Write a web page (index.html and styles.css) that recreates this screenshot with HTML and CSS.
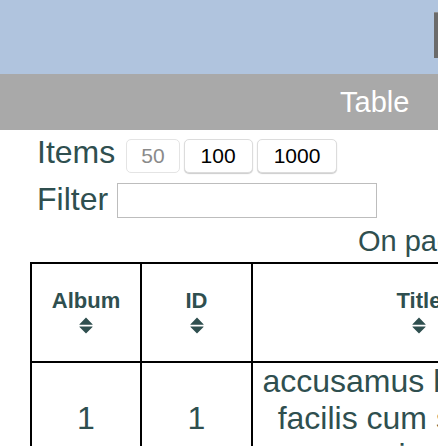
FILE: index.html
```html
<!DOCTYPE html>
<html lang="en">
<head>
<meta charset="utf-8">
<title>Table</title>
<link rel="stylesheet" href="styles.css">
</head>
<body>
<div class="page">
  <header class="topbar">
    <div class="search-box"></div>
  </header>
  <nav class="navbar">
    <span class="nav-title">Table</span>
  </nav>
  <main class="content">
    <div class="items-row">
      <span class="row-label">Items</span>
      <div class="size-group">
        <button class="size-btn is-current" disabled>50</button>
        <button class="size-btn">100</button>
        <button class="size-btn">1000</button>
      </div>
    </div>
    <div class="filter-row">
      <label class="row-label" for="filter">Filter</label>
      <input class="filter-input" id="filter" type="text">
    </div>
    <div class="pager">On page 1 of 100</div>
    <table class="data-table">
      <colgroup>
        <col class="col-album">
        <col class="col-id">
        <col class="col-title">
      </colgroup>
      <thead>
        <tr>
          <th><span class="th-label">Album</span><svg class="sort-icon" viewBox="0 0 14 17" aria-hidden="true"><path d="M7 0.5 L13.5 7.2 Q14 7.8 13.2 7.8 H0.8 Q0 7.8 0.5 7.2 Z M0.8 9.4 H13.2 Q14 9.4 13.5 10 L7 16.6 L0.5 10 Q0 9.4 0.8 9.4 Z"/></svg></th>
          <th><span class="th-label">ID</span><svg class="sort-icon" viewBox="0 0 14 17" aria-hidden="true"><path d="M7 0.5 L13.5 7.2 Q14 7.8 13.2 7.8 H0.8 Q0 7.8 0.5 7.2 Z M0.8 9.4 H13.2 Q14 9.4 13.5 10 L7 16.6 L0.5 10 Q0 9.4 0.8 9.4 Z"/></svg></th>
          <th><span class="th-label">Title</span><svg class="sort-icon" viewBox="0 0 14 17" aria-hidden="true"><path d="M7 0.5 L13.5 7.2 Q14 7.8 13.2 7.8 H0.8 Q0 7.8 0.5 7.2 Z M0.8 9.4 H13.2 Q14 9.4 13.5 10 L7 16.6 L0.5 10 Q0 9.4 0.8 9.4 Z"/></svg></th>
        </tr>
      </thead>
      <tbody>
        <tr>
          <td>1</td>
          <td>1</td>
          <td>accusamus beatae ad facilis cum similique qui sunt</td>
        </tr>
        <tr>
          <td>1</td>
          <td>2</td>
          <td>reprehenderit est deserunt velit ipsam</td>
        </tr>
      </tbody>
    </table>
  </main>
</div>
</body>
</html>
```
FILE: styles.css
```css
html, body {
  margin: 0;
  padding: 0;
  overflow: hidden;
}

body {
  font-family: "Liberation Sans", Arial, sans-serif;
  color: #2f4f4f;
}

.page {
  width: 1000px;
}

.topbar {
  height: 74px;
  background: #b0c4de;
  box-sizing: border-box;
  padding: 12px 0 0 434px;
}

.search-box {
  width: 220px;
  height: 46px;
  box-sizing: border-box;
  background: #6b6b6b;
  border-top: 1px solid #8e8e8e;
}

.navbar {
  height: 56px;
  background: #a9a9a9;
  display: flex;
  align-items: center;
  padding-left: 340px;
}

.nav-title {
  color: #ffffff;
  font-size: 29px;
}

.content {
  padding-top: 4px;
}

.row-label {
  font-size: 32px;
}

.items-row {
  display: flex;
  align-items: baseline;
  padding-left: 37px;
}

.size-group {
  display: flex;
  gap: 4px;
  margin-left: 11px;
}

.size-btn {
  font-family: "Liberation Sans", Arial, sans-serif;
  font-size: 21px;
  line-height: 24px;
  padding: 4px 16px;
  border: 1px solid #dcdcdc;
  border-radius: 5px;
  background: #ffffff;
  color: #000000;
  box-shadow: 0 1px 1px rgba(0, 0, 0, 0.2);
}

.size-btn.is-current {
  color: #8a8a8a;
  padding: 4px 14px;
  box-shadow: none;
  border-color: #e4e4e4;
}

.filter-row {
  display: flex;
  align-items: flex-end;
  padding-left: 37px;
  margin-top: 8px;
}

.filter-input {
  width: 260px;
  height: 35px;
  box-sizing: border-box;
  margin-left: 9px;
  border: 1px solid #bdbdbd;
  border-radius: 0;
  padding: 0 4px;
  font-size: 20px;
}

.pager {
  font-size: 29px;
  padding-left: 358px;
  margin-top: 7px;
}

.data-table {
  margin: 4px 0 0 30px;
  border-collapse: collapse;
  table-layout: fixed;
  width: 555px;
  border: 2px solid #000000;
}

.col-album { width: 110px; }
.col-id { width: 111px; }
.col-title { width: 334px; }

.data-table th,
.data-table td {
  border: 2px solid #000000;
  text-align: center;
  vertical-align: middle;
}

.data-table th {
  font-size: 22px;
  font-weight: bold;
  padding: 24px 8px 27px;
}

.th-label {
  display: block;
}

.sort-icon {
  display: block;
  width: 14px;
  height: 17px;
  margin: 3px auto 0;
  fill: #2f4f4f;
}

.data-table td {
  font-size: 32px;
  padding: 0 8px;
}
```
